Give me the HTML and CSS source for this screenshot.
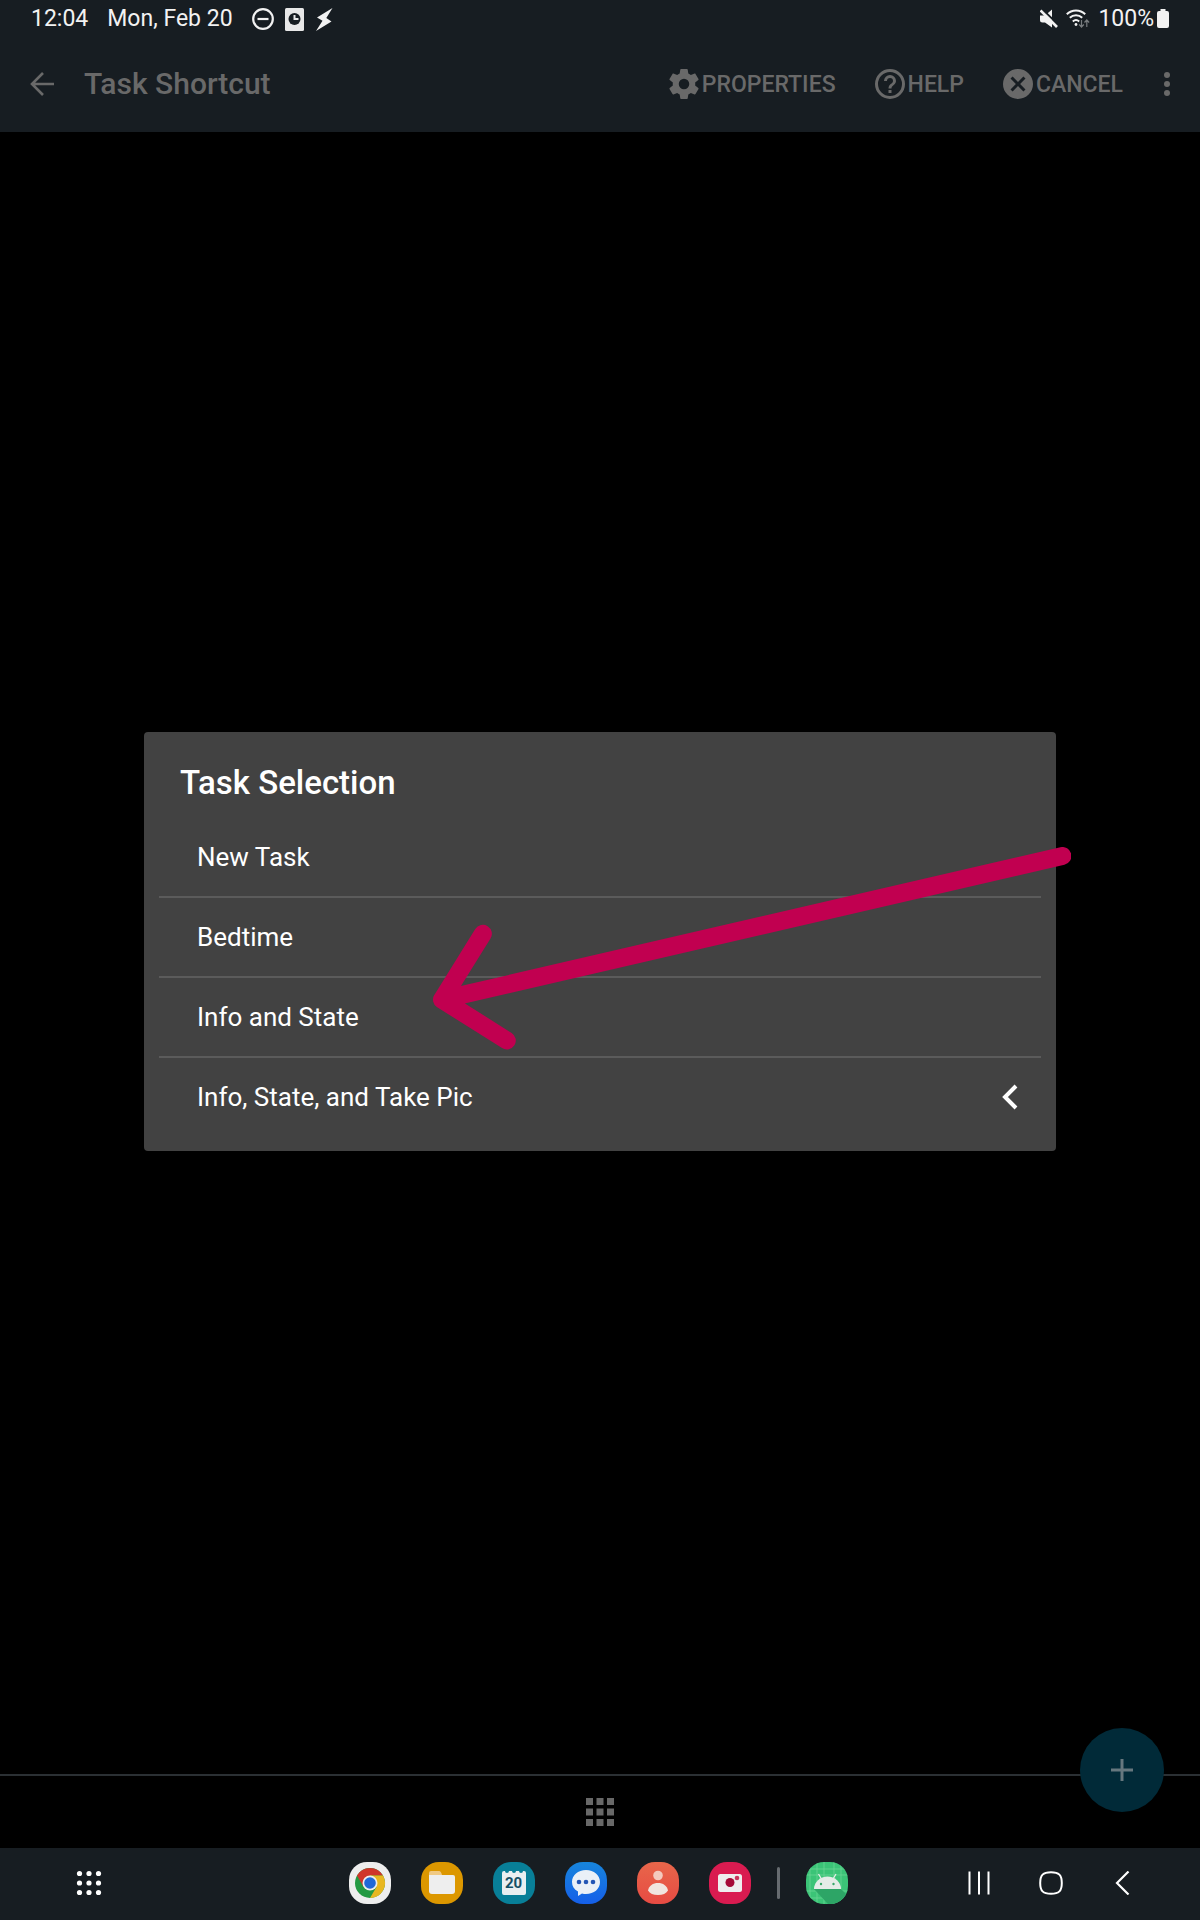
FILE: index.html
```html
<!DOCTYPE html>
<html lang="en">
<head>
<meta charset="utf-8">
<meta name="viewport" content="width=device-width, initial-scale=1">
<title>Task Shortcut</title>
<link rel="stylesheet" href="styles.css">
</head>
<body>
<div class="screen">
  <div class="status">
    <div class="status-left">
      <span>12:04</span>
      <span>Mon, Feb 20</span>
      <div class="status-icons">
        <svg width="22" height="24" viewBox="0 0 22 24"><circle cx="11" cy="12" r="9.8" fill="none" stroke="#f2f2f2" stroke-width="2.2"/><path d="M5.500 12h11" stroke="#f2f2f2" stroke-width="2.200"/></svg>
        <svg width="19" height="24" viewBox="0 0 19 24"><rect y="1" width="19" height="23" rx="1.500" fill="#e8e8e8"/><circle cx="9.500" cy="12" r="6" fill="#171d22"/><path d="M9.500 8v4h4" fill="none" stroke="#e8e8e8" stroke-width="2"/></svg>
        <svg width="18" height="24" viewBox="0 0 18 24"><path d="M17.500 1 2 10.500l5.500 3.200L1 24l15.500-9.500-5.200-3.500z" fill="#f2f2f2"/></svg>
      </div>
    </div>
    <div class="status-right">
      <svg width="18" height="20" viewBox="0 0 18 20"><path d="M0 6.500h5l7-6v18l-7-5H2.500Q0 13.500 0 11z" fill="#f2f2f2"/><path d="M2 0 18.500 16" stroke="#171d22" stroke-width="2"/><path d="M.500 1.500 17 18" stroke="#f2f2f2" stroke-width="2.600"/></svg>
      <svg width="24" height="20" viewBox="0 0 24 20" fill="none" stroke="#f2f2f2" stroke-width="2"><path d="M.800 5.200a13 13 0 0 1 18.400 0M3.800 8.800a9 9 0 0 1 12.400 0M6.800 12.400a5 5 0 0 1 6.400 0"/><circle cx="10" cy="15.500" r="1.400" fill="#f2f2f2" stroke="none"/><path d="M15.500 11v7m-2.300-2.500 2.300 2.500 2.300-2.500M20.800 18v-7m-2.300 2.500 2.300-2.500 2.300 2.500" stroke="#777b7e" stroke-width="1.200"/></svg>
      <span class="battery">100%<svg width="12" height="20" viewBox="0 0 12 20"><path d="M3.500 0h5v2H10a2 2 0 0 1 2 2v13a2 2 0 0 1-2 2H2a2 2 0 0 1-2-2V4a2 2 0 0 1 2-2h1.500z" fill="#f2f2f2"/></svg></span>
    </div>
  </div>

  <header class="appbar">
    <button class="back" aria-label="Back"><svg width="24" height="24" viewBox="0 0 24 24" fill="none" stroke="currentColor" stroke-width="2.600"><path d="M24 12H2M13 1 2 12l11 11"/></svg></button>
    <h1>Task Shortcut</h1>
    <nav class="actions">
      <button><svg width="36" height="36" viewBox="0 0 24 24" fill="currentColor"><path d="M19.430 12.980c.04-.32.070-.640.070-.980s-.03-.660-.070-.980l2.110-1.650c.19-.150.240-.420.120-.640l-2-3.460c-.12-.220-.390-.300-.610-.220l-2.490 1c-.52-.400-1.080-.730-1.690-.980l-.38-2.650C14.460 2.180 14.250 2 14 2h-4c-.25 0-.460.180-.490.420l-.38 2.650c-.61.250-1.170.590-1.690.980l-2.490-1c-.23-.090-.490 0-.610.220l-2 3.460c-.13.220-.070.490.120.640l2.110 1.650c-.04.320-.070.650-.070.980s.030.660.070.980l-2.110 1.650c-.19.150-.240.420-.120.640l2 3.460c.12.220.390.300.610.220l2.490-1c.52.400 1.080.730 1.690.980l.38 2.650c.03.240.240.420.490.420h4c.25 0 .460-.180.490-.420l.38-2.650c.61-.250 1.170-.590 1.690-.980l2.490 1c.23.090.490 0 .610-.220l2-3.460c.12-.220.070-.490-.120-.640zM12 15.500a3.500 3.500 0 1 1 0-7 3.500 3.500 0 0 1 0 7z"/></svg>PROPERTIES</button>
      <button><svg width="36" height="36" viewBox="0 0 24 24" fill="currentColor"><path d="M11 18h2v-2h-2zm1-16a10 10 0 1 0 0 20 10 10 0 0 0 0-20zm0 18a8 8 0 1 1 0-16 8 8 0 0 1 0 16zm0-14a4 4 0 0 0-4 4h2a2 2 0 1 1 4 0c0 2-3 1.750-3 5h2c0-2.250 3-2.500 3-5a4 4 0 0 0-4-4z"/></svg>HELP</button>
      <button><svg width="36" height="36" viewBox="0 0 24 24" fill="currentColor"><path d="M12 2a10 10 0 1 0 0 20 10 10 0 0 0 0-20zm5 13.590L15.590 17 12 13.410 8.410 17 7 15.590 10.590 12 7 8.410 8.410 7 12 10.590 15.590 7 17 8.410 13.410 12z"/></svg>CANCEL</button>
    </nav>
    <button class="more" aria-label="More options"><svg width="8" height="26" viewBox="0 0 8 26" fill="currentColor"><circle cx="4" cy="4" r="3"/><circle cx="4" cy="13" r="3"/><circle cx="4" cy="22" r="3"/></svg></button>
  </header>

  <main class="workspace"></main>

  <div class="tabs">
    <button class="tab" aria-label="Projects"><svg width="28" height="28" viewBox="0 0 28 28" fill="currentColor"><path d="M0 0h7v7H0zM10.500 0h7v7h-7zM21 0h7v7h-7zM0 10.500h7v7H0zM10.500 10.500h7v7h-7zM21 10.500h7v7h-7zM0 21h7v7H0zM10.500 21h7v7h-7zM21 21h7v7h-7z"/></svg></button>
    <button class="fab" aria-label="Add"><svg width="22" height="22" viewBox="0 0 22 22"><path d="M11 0v22M0 11h22" stroke="#66777e" stroke-width="3"/></svg></button>
  </div>

  <footer class="taskbar">
    <button class="drawer" aria-label="All apps"><svg width="26" height="26" viewBox="0 0 26 26" fill="#fff"><circle cx="3.500" cy="3.500" r="2.600"/><circle cx="13" cy="3.500" r="2.600"/><circle cx="22.500" cy="3.500" r="2.600"/><circle cx="3.500" cy="13" r="2.600"/><circle cx="13" cy="13" r="2.600"/><circle cx="22.500" cy="13" r="2.600"/><circle cx="3.500" cy="22.500" r="2.600"/><circle cx="13" cy="22.500" r="2.600"/><circle cx="22.500" cy="22.500" r="2.600"/></svg></button>
    <div class="dock">
      <div class="apps">
        <button class="app chrome" aria-label="Chrome"><svg width="42" height="42" viewBox="0 0 42 42"><circle cx="21" cy="21" r="15" fill="#249a43"/><path d="M8 13.500A15 15 0 0 1 34 13.500H21L14.500 25z" fill="#cf352b"/><path d="M34 13.500A15 15 0 0 1 21 36L27.500 25 21 13.500z" fill="#e8b720"/><circle cx="21" cy="21" r="7.500" fill="#eee"/><circle cx="21" cy="21" r="5.800" fill="#1f68d8"/></svg></button>
        <button class="app files" aria-label="My Files"><svg width="42" height="42" viewBox="0 0 42 42"><path d="M8 18v-7a2 2 0 0 1 2-2h8q2 0 3 4h4v5z" fill="#f0c983"/><path d="M8 13h24a2 2 0 0 1 2 2v14a3 3 0 0 1-3 3H11a3 3 0 0 1-3-3z" fill="#eee"/></svg></button>
        <button class="app calendar" aria-label="Calendar">20<svg width="42" height="42" viewBox="0 0 42 42"><path d="M9 11q0-2 2-2h1a2 2 0 0 0 4 0h3a2 2 0 0 0 4 0h3a2 2 0 0 0 4 0h1q2 0 2 2v20a2 2 0 0 1-2 2H11a2 2 0 0 1-2-2z" fill="#e9eff1"/></svg></button>
        <button class="app messages" aria-label="Messages"><svg width="42" height="42" viewBox="0 0 42 42"><path d="M21 8c8 0 14 5 14 12s-6 12-14 12q-2 0-4-.500l-4 2.500v-4.500C9 27.500 7 24 7 20 7 13 13 8 21 8z" fill="#eaf0f7"/><g fill="#2456b5"><circle cx="14" cy="20" r="2.300"/><circle cx="21" cy="20" r="2.300"/><circle cx="28" cy="20" r="2.300"/></g></svg></button>
        <button class="app contacts" aria-label="Contacts"><svg width="42" height="42" viewBox="0 0 42 42"><circle cx="21" cy="13.500" r="4.800" fill="#f4c9bd"/><path d="M11 28.500c1-5 5-7.500 10-7.500s9 2.500 10 7.500c-2 3-5 4.500-10 4.500s-8-1.500-10-4.500z" fill="#f1e5df"/></svg></button>
        <button class="app camera" aria-label="Camera"><svg width="42" height="42" viewBox="0 0 42 42"><rect x="9" y="12" width="24" height="18" rx="2.500" fill="#eee"/><circle cx="21" cy="20.500" r="4.500" fill="#a50b38"/><circle cx="28" cy="16" r="2.300" fill="#c9365e"/></svg></button>
      </div>
      <span class="divider"></span>
      <button class="app android" aria-label="Android app"><svg width="42" height="42" viewBox="0 0 42 42"><path d="M4 0v42M11 0v42M18 0v42M28 0v42M35 0v42M0 7h42M0 13h42M0 29h42M0 36h42" stroke="#69d596" stroke-width=".800"/><path d="M8 27h27l7 7v8H22z" fill="#2da566"/><path d="M8 27a13.500 12.500 0 0 1 27 0z" fill="#e4ece7"/><path d="m12.500 12 3 5M30 12l-3 5" stroke="#e4ece7" stroke-width="1.300"/><circle cx="15" cy="22" r="1.200" fill="#37a768"/><circle cx="27.500" cy="22" r="1.200" fill="#37a768"/></svg></button>
    </div>
    <nav class="system-nav">
      <button aria-label="Recent apps"><svg width="24" height="24" viewBox="0 0 24 24" fill="none" stroke="#fff" stroke-width="2"><path d="M2.500 .500v23M12 .500v23M21.500 .500v23"/></svg></button>
      <button aria-label="Home"><svg width="24" height="24" viewBox="0 0 24 24" fill="none" stroke="#fff" stroke-width="2"><path d="M12 1.200c8 0 10.800 2.800 10.800 10.800S20 22.800 12 22.800 1.200 20 1.200 12 4 1.200 12 1.200z"/></svg></button>
      <button aria-label="Go back"><svg width="24" height="24" viewBox="0 0 24 24" fill="none" stroke="#fff" stroke-width="2.200"><path d="M17.500 .500 6 12l11.500 11.500"/></svg></button>
    </nav>
  </footer>

  <div class="overlay">
    <section class="dialog" role="dialog" aria-labelledby="dialog-title">
      <h2 id="dialog-title">Task Selection</h2>
      <ul class="tasks">
        <li><button>New Task</button></li>
        <li><button>Bedtime</button></li>
        <li><button>Info and State</button></li>
        <li><button>Info, State, and Take Pic<svg width="16" height="26" viewBox="0 0 16 26" fill="none" stroke="#fff" stroke-width="4"><path d="M14 2 3 13l11 11"/></svg></button></li>
      </ul>
      <svg class="arrow" viewBox="0 0 640 204" fill="none" stroke="#c10050" stroke-width="18" stroke-linecap="round" stroke-linejoin="round"><path d="M631 9 9 153M50 87 9 153l65 41"/></svg>
    </section>
  </div>
</div>
</body>
</html>
```
FILE: styles.css
```css
* { box-sizing: border-box; }

body {
  margin: 0;
  background: #000;
  color: #fff;
  font-family: Roboto, "Liberation Sans", sans-serif;
}

button {
  display: flex;
  align-items: center;
  justify-content: center;
  padding: 0;
  border: 0;
  background: none;
  color: inherit;
  font: inherit;
}

svg { display: block; flex: none; }

h1, h2, ul { margin: 0; padding: 0; }
h1, h2 { font-weight: 500; }

.screen {
  position: relative;
  display: flex;
  flex-direction: column;
  min-height: 100vh;
}

.status {
  display: flex;
  justify-content: space-between;
  height: 36px;
  padding: 1px 31px 0;
  background: #171d22;
  color: #f2f2f2;
  font-size: 23px;
  line-height: 36px;
}

.status-left, .status-right, .status-icons, .battery {
  display: flex;
  align-items: center;
}

.status-left { gap: 19px; }
.status-icons { gap: 11px; }
.status-right { gap: 8px; }
.battery { gap: 3px; }

.appbar {
  display: flex;
  align-items: center;
  height: 96px;
  padding: 0 29px 0 30px;
  background: #171d22;
  color: #696969;
}

.appbar h1 {
  flex: 1;
  margin-left: 30px;
  font-size: 30px;
  line-height: 36px;
}

.actions {
  display: flex;
  gap: 36px;
  margin-right: 40px;
  font-size: 23px;
  font-weight: 500;
}

.workspace { flex: 1; }

.tabs {
  position: relative;
  height: 74px;
  border-top: 2px solid #2b3034;
}

.tab {
  width: 100%;
  height: 100%;
  color: #686868;
}

.fab {
  position: absolute;
  top: -48px;
  right: 36px;
  width: 84px;
  height: 84px;
  border-radius: 50%;
  background: #012a38;
}

.taskbar {
  display: grid;
  grid-template-columns: 1fr auto 1fr;
  align-items: center;
  height: 72px;
  padding: 0 65px 2px;
  background: #171d22;
}

.drawer {
  justify-self: start;
  margin-left: 11px;
}

.dock {
  display: flex;
  align-items: center;
  gap: 26px;
  margin-right: 4px;
}

.apps { display: flex; gap: 30px; }

.app {
  position: relative;
  width: 42px;
  height: 42px;
  border-radius: 18px;
  overflow: hidden;
}

.app svg { position: absolute; inset: 0; }

.chrome { background: #eee; }
.files { background: #dc9700; }
.calendar {
  background: #087f98;
  color: #155066;
  font-size: 15px;
  font-weight: 700;
  isolation: isolate;
}
.calendar svg { z-index: -1; }
.messages { background: linear-gradient(#1785dc, #155fe9); }
.contacts { background: linear-gradient(#e8664a, #e74b43); }
.camera { background: #d91b50; }
.android { background: #3bc477; }

.divider {
  width: 3px;
  height: 32px;
  border-radius: 2px;
  background: #666b70;
}

.system-nav {
  display: flex;
  gap: 48px;
  justify-self: end;
}

.overlay {
  position: absolute;
  inset: 36px 0 73px;
  display: flex;
  align-items: center;
  justify-content: center;
}

.dialog {
  position: relative;
  width: 76%;
  padding: 30px 15px 15px;
  border-radius: 4px;
  background: #424242;
}

.dialog h2 {
  margin-bottom: 14px;
  padding-left: 21px;
  font-size: 33px;
  line-height: 42px;
}

.tasks { list-style: none; }
.tasks li + li { border-top: 2px solid #5b5b5b; }

.tasks button {
  justify-content: space-between;
  width: 100%;
  height: 78px;
  padding: 0 23px 0 38px;
  font-size: 26px;
  text-align: left;
}

.arrow {
  position: absolute;
  top: 115px;
  right: -15px;
  width: 70%;
}
```
